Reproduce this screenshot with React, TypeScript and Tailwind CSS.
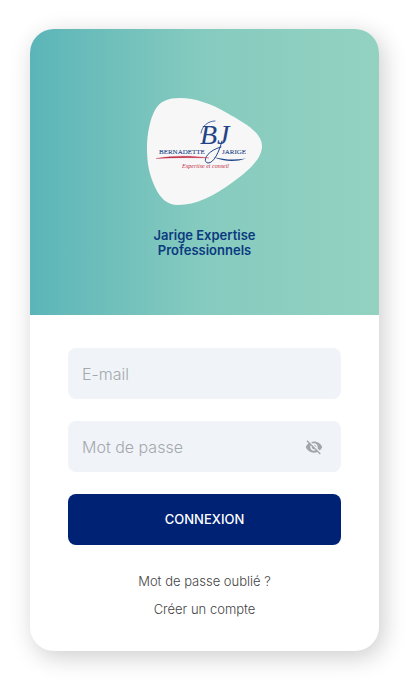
import { useState } from "react";
import { MdVisibilityOff, MdVisibility } from "react-icons/md";

function Logo() {
  return (
    <svg viewBox="0 0 115 107" className="h-[107px] w-[115px]" role="img" aria-label="Bernadette Jarige, Expertise et conseil">
      <path
        d="M33 0C48 0 65 6 80 15C98 25 115 35 115 48C115 60 103 72 86 84C67 98 49 107 31 107C20 107 13 100 8 89C2 76 0 65 0 50C0 36 3 21 8 12C13 3 21 0 33 0Z"
        fill="#f7f7f8"
      />
      <g fill="#1f4587" fontFamily="'Liberation Serif', serif">
        <text x="12" y="56" fontSize="7" stroke="#1f4587" strokeWidth="0.1">BERNADETTE</text>
        <text x="75" y="56" fontSize="7" stroke="#1f4587" strokeWidth="0.1">JARIGE</text>
        <text x="53" y="46" fontSize="28" fontStyle="italic">BJ</text>
      </g>
      {/* flourishes around the monogram */}
      <g fill="none" stroke="#1f4587" strokeLinecap="round">
        <path d="M54 35C55 28 61 23 68 23" strokeWidth="0.8" />
        <path d="M75 43C72 54 67 65 61 65C55 64 59 53 74 49" strokeWidth="1" />
      </g>
      <path d="M9 60.5C26 57.5 44 57.5 62 60C44 59.5 26 59.5 9 60.5Z" fill="#c22c45" stroke="#c22c45" strokeWidth="0.3" />
      <path d="M66 59C76 61.5 87 62.5 99 60.5C88 64.5 77 63.5 66 59Z" fill="#1f4587" />
      <text x="35" y="70" fontSize="6" fontStyle="italic" fill="#c22c45" fontFamily="'Liberation Serif', serif">
        Expertise et conseil
      </text>
    </svg>
  );
}

const fieldClass =
  "h-[51px] w-full rounded-lg bg-[#f0f4f8] pl-[14px] text-base font-light text-gray-700 placeholder:text-[#a5a8ac] focus:outline-none focus:ring-1 focus:ring-[#002275]";

export default function App() {
  const [email, setEmail] = useState("");
  const [password, setPassword] = useState("");
  const [visible, setVisible] = useState(false);

  const handleSubmit = (e: React.FormEvent) => {
    e.preventDefault();
  };

  return (
    <main className="min-h-screen bg-white pt-[29px] pr-10 pb-10 pl-[30px] font-['Inter',sans-serif]">
      <div className="overflow-hidden rounded-3xl bg-white shadow-[4px_6px_24px_rgba(0,0,0,0.2)]">
        {/* Header */}
        <header className="flex flex-col items-center bg-linear-to-r from-[#5bb5b8] via-[#86cbbf] to-[#93d2c1] pt-[69px] pb-[57px] text-center">
          <Logo />
          <h1 className="mt-[23px] max-w-36 text-[13px] leading-[15px] font-semibold text-[#0b3a80]">
            Jarige Expertise Professionnels
          </h1>
        </header>

        {/* Login form */}
        <form onSubmit={handleSubmit} className="flex flex-col gap-[22px] px-[38px] pt-[33px]">
          <input
            type="email"
            aria-label="E-mail"
            placeholder="E-mail"
            value={email}
            onChange={(e) => setEmail(e.target.value)}
            className={fieldClass + " pr-4"}
          />
          <div className="relative">
            <input
              type={visible ? "text" : "password"}
              aria-label="Mot de passe"
              placeholder="Mot de passe"
              value={password}
              onChange={(e) => setPassword(e.target.value)}
              className={fieldClass + " pr-12"}
            />
            <button
              type="button"
              aria-label="Afficher le mot de passe"
              onClick={() => setVisible(!visible)}
              className="absolute inset-y-0 right-[18px] text-[#a2a4a7]"
            >
              {visible ? <MdVisibility size={18} /> : <MdVisibilityOff size={18} />}
            </button>
          </div>
          <button type="submit" className="h-[51px] rounded-lg bg-[#002275] text-[13px] font-medium text-white">
            CONNEXION
          </button>
        </form>

        <nav className="flex flex-col items-center gap-2 pt-[26px] pb-8 text-[13px] leading-5 font-light text-[#444444]">
          <a href="#forgot">Mot de passe oublié ?</a>
          <a href="#register">Créer un compte</a>
        </nav>
      </div>
    </main>
  );
}
